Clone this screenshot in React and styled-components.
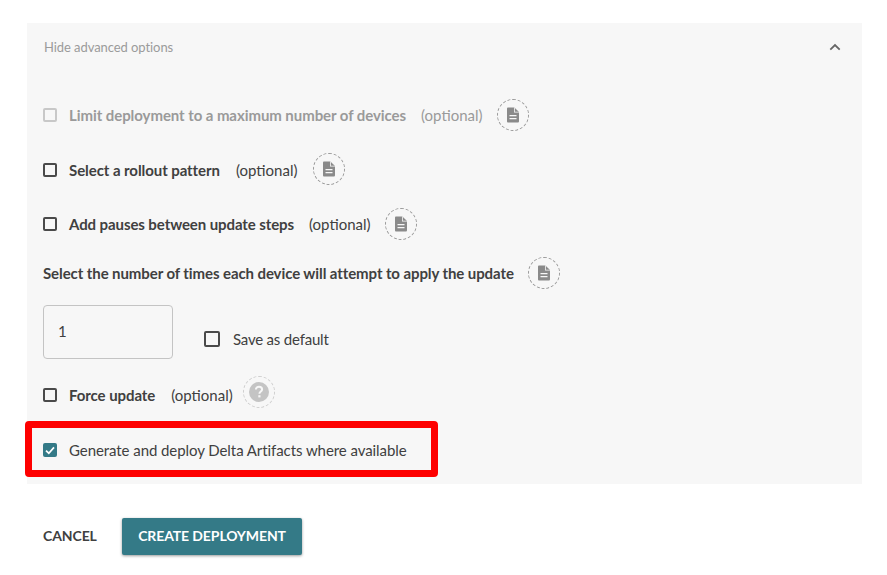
import React from "react";
import styled, { createGlobalStyle } from "styled-components";

const GlobalStyle = createGlobalStyle`
  html, body {
    margin: 0;
    background: #fff;
    font-family: "Lato", "Liberation Sans", sans-serif;
  }
`;

function DocIcon() {
  return (
    <svg width="14" height="16" viewBox="0 0 14 16">
      <path
        fill="#8a8a8a"
        d="M2.2 0.5H8.4L13 5.1V14.2C13 15 12.4 15.5 11.7 15.5H2.2C1.5 15.5 1 15 1 14.2V1.8C1 1 1.5 0.5 2.2 0.5Z"
      />
      <path fill="#f7f7f7" d="M8 0.5V5.5H13V4.7H8.8V0.5Z" />
      <path fill="#f7f7f7" d="M3.5 8H10.5V9.3H3.5ZM3.5 11H10.5V12.3H3.5Z" />
    </svg>
  );
}

function HelpIcon() {
  return (
    <svg width="20" height="20" viewBox="0 0 20 20">
      <circle cx="10" cy="10" r="10" fill="#c4c4c4" />
      <path
        d="M6.9 7.6C6.9 5.9 8.3 4.8 10 4.8C11.8 4.8 13.1 5.9 13.1 7.4C13.1 9.4 10.4 9.5 10.4 11.7"
        fill="none"
        stroke="#f7f7f7"
        strokeWidth="2"
      />
      <rect x="9.3" y="13.2" width="2.2" height="2.2" fill="#f7f7f7" />
    </svg>
  );
}

function Checkbox({ checked, disabled, large }) {
  return (
    <Box $checked={checked} $disabled={disabled} $large={large}>
      {checked && (
        <svg width="10" height="9" viewBox="0 0 10 9">
          <path d="M1 4.6L3.8 7.2L9 1.4" fill="none" stroke="#fff" strokeWidth="1.7" />
        </svg>
      )}
    </Box>
  );
}

function App() {
  return (
    <Page>
      <GlobalStyle />
      <Panel>
        <Header>
          <HeaderText>Hide advanced options</HeaderText>
          <svg width="12" height="8" viewBox="0 0 12 8">
            <path d="M1.3 6.6L6 2L10.7 6.6" fill="none" stroke="#666" strokeWidth="1.8" />
          </svg>
        </Header>

        <OptionRow $top={28}>
          <Checkbox disabled />
          <Label $disabled>Limit deployment to a maximum number of devices</Label>
          <Optional $disabled>(optional)</Optional>
          <Hint $lift={1}><DocIcon /></Hint>
        </OptionRow>

        <OptionRow $top={23}>
          <Checkbox />
          <Label>Select a rollout pattern</Label>
          <Optional $gap={16}>(optional)</Optional>
          <Hint $gap={16} $lift={3}><DocIcon /></Hint>
        </OptionRow>

        <OptionRow $top={22}>
          <Checkbox />
          <Label $tight>Add pauses between update steps</Label>
          <Optional>(optional)</Optional>
          <Hint><DocIcon /></Hint>
        </OptionRow>

        <AttemptsTitle>
          <Label $tight>Select the number of times each device will attempt to apply the update</Label>
          <Hint><DocIcon /></Hint>
        </AttemptsTitle>

        <AttemptsRow>
          <NumberInput>1</NumberInput>
          <SaveDefault>
            <Checkbox large />
            <SaveText>Save as default</SaveText>
          </SaveDefault>
        </AttemptsRow>

        <OptionRow $top={20}>
          <Checkbox />
          <Label>Force update</Label>
          <Optional $gap={16}>(optional)</Optional>
          <HelpHint $lift={6}><HelpIcon /></HelpHint>
        </OptionRow>

        <DeltaRow>
          <Highlight />
          <Checkbox checked />
          <PlainText>Generate and deploy Delta Artifacts where available</PlainText>
        </DeltaRow>
      </Panel>

      <Actions>
        <CancelButton>CANCEL</CancelButton>
        <CreateButton>CREATE DEPLOYMENT</CreateButton>
      </Actions>
    </Page>
  );
}

const Page = styled.div`
  width: 887px;
  height: 575px;
  box-sizing: border-box;
  padding: 23px 25px 0 27px;
  overflow: hidden;
`;

const Panel = styled.section`
  height: 461px;
  box-sizing: border-box;
  background: #f7f7f7;
  padding: 0 16px;
`;

const Header = styled.div`
  height: 48px;
  display: flex;
  align-items: center;
  justify-content: space-between;
  padding-right: 5px;
`;

const HeaderText = styled.span`
  font-size: 13px;
  letter-spacing: -0.07px;
  color: #9b9b9b;
  margin-left: 1px;
`;

const OptionRow = styled.div`
  display: flex;
  align-items: center;
  height: 32px;
  margin-top: ${(p) => p.$top}px;
`;

const Box = styled.span`
  flex: none;
  box-sizing: border-box;
  width: ${(p) => (p.$large ? 16 : 14)}px;
  height: ${(p) => (p.$large ? 16 : 14)}px;
  display: flex;
  align-items: center;
  justify-content: center;
  border-radius: 2px;
  border: ${(p) =>
    p.$checked ? "none" : `2px solid ${p.$disabled ? "#c8c8c8" : "#4a4a4a"}`};
  background: ${(p) => (p.$checked ? "#347a87" : "transparent")};
  margin-left: ${(p) => (p.$large ? 1 : 0)}px;
  margin-right: ${(p) => (p.$large ? 13 : 12)}px;
`;

const Label = styled.span`
  font-size: 15px;
  font-weight: 700;
  letter-spacing: ${(p) => (p.$tight ? -0.09 : -0.07)}px;
  color: ${(p) => (p.$disabled ? "#9a9a9a" : "#404040")};
  white-space: nowrap;
`;

const Optional = styled.span`
  font-size: 15px;
  color: ${(p) => (p.$disabled ? "#9a9a9a" : "#404040")};
  margin-left: ${(p) => p.$gap ?? 15}px;
`;

const Hint = styled.span`
  flex: none;
  box-sizing: border-box;
  width: 32px;
  height: 32px;
  margin-left: ${(p) => p.$gap ?? 14}px;
  margin-bottom: ${(p) => p.$lift ?? 0}px;
  display: flex;
  align-items: center;
  justify-content: center;
  border: 1px dashed #9a9a9a;
  border-radius: 50%;
`;

const HelpHint = styled(Hint)`
  border-color: #cfcfcf;
  margin-left: 10px;
`;

const AttemptsTitle = styled.div`
  display: flex;
  align-items: center;
  height: 32px;
  margin-top: 17px;
`;

const AttemptsRow = styled.div`
  display: flex;
  align-items: flex-end;
  margin-top: 16px;
`;

const NumberInput = styled.div`
  width: 130px;
  height: 54px;
  box-sizing: border-box;
  border: 1px solid #c4c4c4;
  border-radius: 4px;
  padding: 0 14px 2px;
  display: flex;
  align-items: center;
  font-size: 15px;
  color: #404040;
`;

const SaveDefault = styled.div`
  display: flex;
  align-items: center;
  margin-left: 30px;
  height: 40px;
`;

const PlainText = styled.span`
  font-size: 15px;
  letter-spacing: -0.07px;
  color: #404040;
  white-space: nowrap;
`;

const SaveText = styled(PlainText)`
  letter-spacing: -0.2px;
`;

const DeltaRow = styled.div`
  position: relative;
  display: flex;
  align-items: center;
  height: 42px;
  margin-top: 18px;
`;

const Highlight = styled.div`
  position: absolute;
  left: -18px;
  top: -8px;
  width: 413px;
  height: 56px;
  box-sizing: border-box;
  border: 7px solid #fe0000;
  border-radius: 4px;
`;

const Actions = styled.div`
  display: flex;
  align-items: center;
  margin-top: 34px;
  padding-left: 16px;
`;

const CancelButton = styled.button`
  border: none;
  background: none;
  padding: 0 0 2px;
  font-family: inherit;
  font-size: 14px;
  font-weight: 700;
  letter-spacing: -0.1px;
  color: #404040;
  width: 79px;
  text-align: left;
`;

const CreateButton = styled.button`
  width: 180px;
  height: 37px;
  border: none;
  border-radius: 2px;
  background: #347a87;
  color: #fff;
  padding: 0 0 2px;
  font-family: inherit;
  font-size: 14px;
  font-weight: 700;
  letter-spacing: -0.1px;
  box-shadow: 0 1px 3px rgba(0, 0, 0, 0.4);
`;

export default App;
